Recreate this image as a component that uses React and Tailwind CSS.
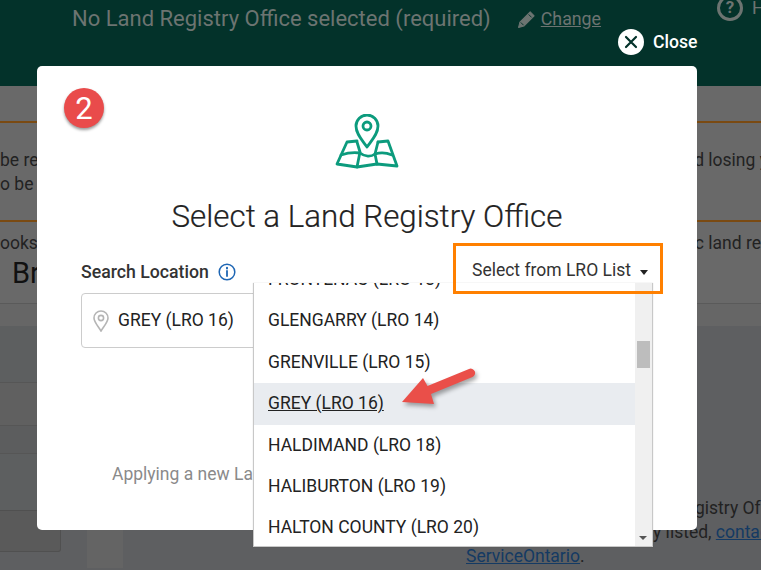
import React from "react";

const options = [
  { label: "GLENGARRY (LRO 14)" },
  { label: "GRENVILLE (LRO 15)" },
  { label: "GREY (LRO 16)", active: true },
  { label: "HALDIMAND (LRO 18)" },
  { label: "HALIBURTON (LRO 19)" },
  { label: "HALTON COUNTY (LRO 20)" },
];

function MapIcon() {
  return (
    <svg width="64" height="56" viewBox="0 0 64 56" fill="none" stroke="#0c9b7d" strokeWidth="2.8" strokeLinejoin="round" strokeLinecap="round">
      <path d="M32 33 C27 26 21 20 21 12 A11 11 0 0 1 43 12 C43 20 37 26 32 33 Z" />
      <circle cx="32" cy="12" r="4" />
      <path d="M22 27 L12 28 L2 50 L22 53 L42 50 L62 52 L53 27 L43 28" />
      <path d="M22 28 L25 38 L22 53" />
      <path d="M43 28 L40 40 L42 50" />
      <path d="M6 41 C12 39 18 38 25 39 C30 43 36 43 40 40 C46 38 50 38 57 41" />
    </svg>
  );
}

function PinIcon() {
  return (
    <svg width="16" height="22" viewBox="0 0 16 22" fill="none" stroke="#b5b5b5" strokeWidth="1.6">
      <path d="M8 21 C5 16 1 12 1 8 A7 7 0 0 1 15 8 C15 12 11 16 8 21 Z" />
      <circle cx="8" cy="8" r="2.6" />
    </svg>
  );
}

function InfoIcon() {
  return (
    <svg width="18" height="18" viewBox="0 0 18 18" fill="none" stroke="#1e66b4" strokeWidth="1.5" strokeLinecap="round">
      <circle cx="9" cy="9" r="7.8" />
      <path d="M9 8 L9 13" strokeWidth="1.8" />
      <path d="M9 4.8 L9 5.4" strokeWidth="2" />
    </svg>
  );
}

function PencilIcon() {
  return (
    <svg width="19" height="19" viewBox="0 0 18 18" fill="#6c7471" stroke="#6c7471" strokeWidth="1" strokeLinejoin="round">
      <path d="M1.5 16.5 L2.8 11.5 L12.5 1.8 L16.2 5.5 L6.5 15.2 Z" />
      <path d="M3.6 11.8 L6.2 14.4 M11 4.2 L13.8 7" stroke="#03322a" strokeWidth="0.9" />
    </svg>
  );
}

export default function App() {
  return (
    <div className="relative h-[570px] w-[761px] overflow-hidden bg-[#5e5f61] font-['Roboto',sans-serif]">
      {/* dimmed page: header */}
      <header className="relative h-[86px] overflow-hidden bg-[#03322a] text-[#6c7471]">
        <div className="flex h-[86px] flex-col pl-[72px] -mt-[21px]">
          <p className="text-[17px] leading-[24px] pl-[2px]">Land Registry Office</p>
          <div className="flex items-center mt-[2px]">
            <span className="text-[22px] leading-[28px]">No Land Registry Office selected (required)</span>
            <span className="ml-[26px] mr-[5px] flex"><PencilIcon /></span>
            <span className="text-[17.8px] leading-[28px] underline">Change</span>
          </div>
        </div>
        <div className="absolute -top-[6px] left-[717px] flex items-center gap-[9px]">
          <span className="flex h-[26px] w-[26px] items-center justify-center rounded-full border-[3px] border-[#6c7471] text-[17px] font-bold">?</span>
          <span className="text-[18px]">Help</span>
        </div>
      </header>

      {/* dimmed page: notice bands */}
      <div className="h-[35px] bg-[#696969]" />
      <div className="h-[2px] bg-[#7a4a12]" />
      <div className="flex h-[97px] justify-between bg-[#696969] pt-[25px] text-[17.5px] leading-[24px] text-[#222]">
        <div>
          <p>be re</p>
          <p className="w-[37px] overflow-hidden whitespace-nowrap">o be c</p>
        </div>
        <p className="-mr-[7px] whitespace-nowrap">d losing y</p>
      </div>
      <div className="h-[2px] bg-[#7a4a12]" />
      <div className="flex h-[81px] flex-col bg-[#696969] text-[#222]">
        <div className="flex justify-between pt-[9px] text-[17.5px] leading-[24px]">
          <p>ooks,</p>
          <p className="whitespace-nowrap">c land re</p>
        </div>
        <p className="pl-[12px] text-[29px] leading-[36px] text-[#111]">Br</p>
      </div>

      {/* dimmed page: table and body */}
      <div className="flex">
        <div className="w-[87px] shrink-0">
          <div className="h-[23px] border-t border-[#5a5a5a] bg-[#666666]" />
          <div className="h-[56px] bg-[#5d5f60]" />
          <div className="h-[43px] border-t border-[#565656] bg-[#606060]" />
          <div className="h-[28px] border-t border-[#565656] bg-[#5c5d5e]" />
          <div className="h-[57px] border-t border-[#565656] bg-[#5d5f60]" />
          <div className="h-[42px] w-[61px] rounded-br-[3px] border-t border-r border-b border-[#505050] bg-[#5a5a5a]" />
        </div>
        <div className="flex w-[36px] shrink-0 flex-col justify-end">
          <div className="h-[40px] bg-[#646464]" />
        </div>
        <div className="flex-1">
          <div className="h-[23px] border-t border-[#5a5a5a] bg-[#666666]" />
          <div className="pl-[343px] pt-[170px] text-[17.5px] leading-[24px] text-[#222]">
            <p className="whitespace-nowrap pl-[229px]">gistry Of</p>
            <p className="whitespace-nowrap pl-[187px]">y listed, <span className="text-[#143a63] underline">contact</span></p>
          </div>
          <p className="pl-[343px] text-[17.5px] leading-[24px] text-[#222]">
            <span className="text-[#143a63] underline">ServiceOntario</span>.
          </p>
        </div>
      </div>

      {/* close control */}
      <button className="absolute left-[618px] top-[29px] flex items-center gap-[9px] text-[17.6px] font-medium leading-[26px] text-white">
        <span className="flex h-[26px] w-[26px] items-center justify-center rounded-full bg-white">
          <svg width="14" height="14" viewBox="0 0 14 14" stroke="#03322a" strokeWidth="2.2" strokeLinecap="round">
            <path d="M2 2 L12 12 M12 2 L2 12" />
          </svg>
        </span>
        Close
      </button>

      {/* modal */}
      <section className="absolute left-[37px] top-[66px] flex h-[464px] w-[660px] flex-col rounded-[5px] bg-white px-[44px]">
        <div className="absolute left-[27px] top-[22px] flex h-[40px] w-[40px] items-center justify-center rounded-full bg-[#e94b4b] text-[31px] leading-none text-white shadow-[0_2px_3px_rgba(0,0,0,0.4)]">
          2
        </div>
        <div className="mt-[48px] flex justify-center">
          <MapIcon />
        </div>
        <h1 className="mt-[27px] text-center text-[31.3px] font-light leading-[40px] text-[#222] [-webkit-text-stroke:0.2px_#222]">
          Select a Land Registry Office
        </h1>
        <div className="mt-[23px] flex h-[24px] items-center gap-[9px]">
          <span className="text-[17.7px] font-medium text-[#333]">Search Location</span>
          <InfoIcon />
        </div>
        <div className="mt-[9px] flex h-[55px] w-[300px] items-center gap-[9px] rounded-[4px] border border-[#cccccc] pl-[11px]">
          <PinIcon />
          <span className="text-[17.5px] text-[#222]">GREY (LRO 16)</span>
        </div>
        <p className="ml-[31px] mt-[113px] whitespace-nowrap text-[17.5px] text-[#8a8a8a]">Applying a new Land Registry Office</p>
      </section>

      {/* dropdown */}
      <div className="absolute left-[253px] top-[283px] flex h-[264px] w-[400px] border border-t-0 border-[#c8c8c8] bg-white shadow-[0_0_1px_rgba(0,0,0,0.2)]">
        <ul className="flex-1 overflow-hidden text-[17.5px] text-[#222]">
          <li className="-mt-[25px] flex h-[41.4px] items-center pl-[14px]">FRONTENAC (LRO 13)</li>
          <li className="-mt-[0px] h-[1px]" />
          {options.map((o) => (
            <li key={o.label} className={`flex h-[41.4px] items-center pb-[1px] pl-[14px] ${o.active ? "bg-[#e9ecf0] underline" : ""}`}>
              {o.label}
            </li>
          ))}
        </ul>
        <div className="relative w-[17px] shrink-0 bg-[#f0f0f0]">
          <div className="absolute left-[2px] top-[58px] h-[27px] w-[13px] bg-[#bdbdbd]" />
          <div className="absolute bottom-[6px] left-[4px] h-0 w-0 border-x-[4px] border-t-[4px] border-x-transparent border-t-[#555]" />
        </div>
      </div>

      {/* highlighted list trigger */}
      <div className="absolute left-[453px] top-[243px] flex h-[51px] w-[210px] items-center border-[3px] border-[#ff8000] pl-[16px] pt-[5px]">
        <span className="text-[17.5px] leading-none text-[#333]">Select from LRO List</span>
        <span className="ml-[9px] mt-[2px] h-0 w-0 border-x-[4px] border-t-[5px] border-x-transparent border-t-[#222]" />
      </div>

      {/* annotation arrow */}
      <svg className="absolute left-[395px] top-[362px] drop-shadow-[2px_3px_2px_rgba(0,0,0,0.35)]" width="90" height="52" viewBox="0 0 90 52">
        <path d="M7 40 L28 16 L32.5 24 L74 7 A4 4 0 0 1 77.5 15 L36 32 L39 42 Z" fill="#ea4f49" />
      </svg>
    </div>
  );
}
